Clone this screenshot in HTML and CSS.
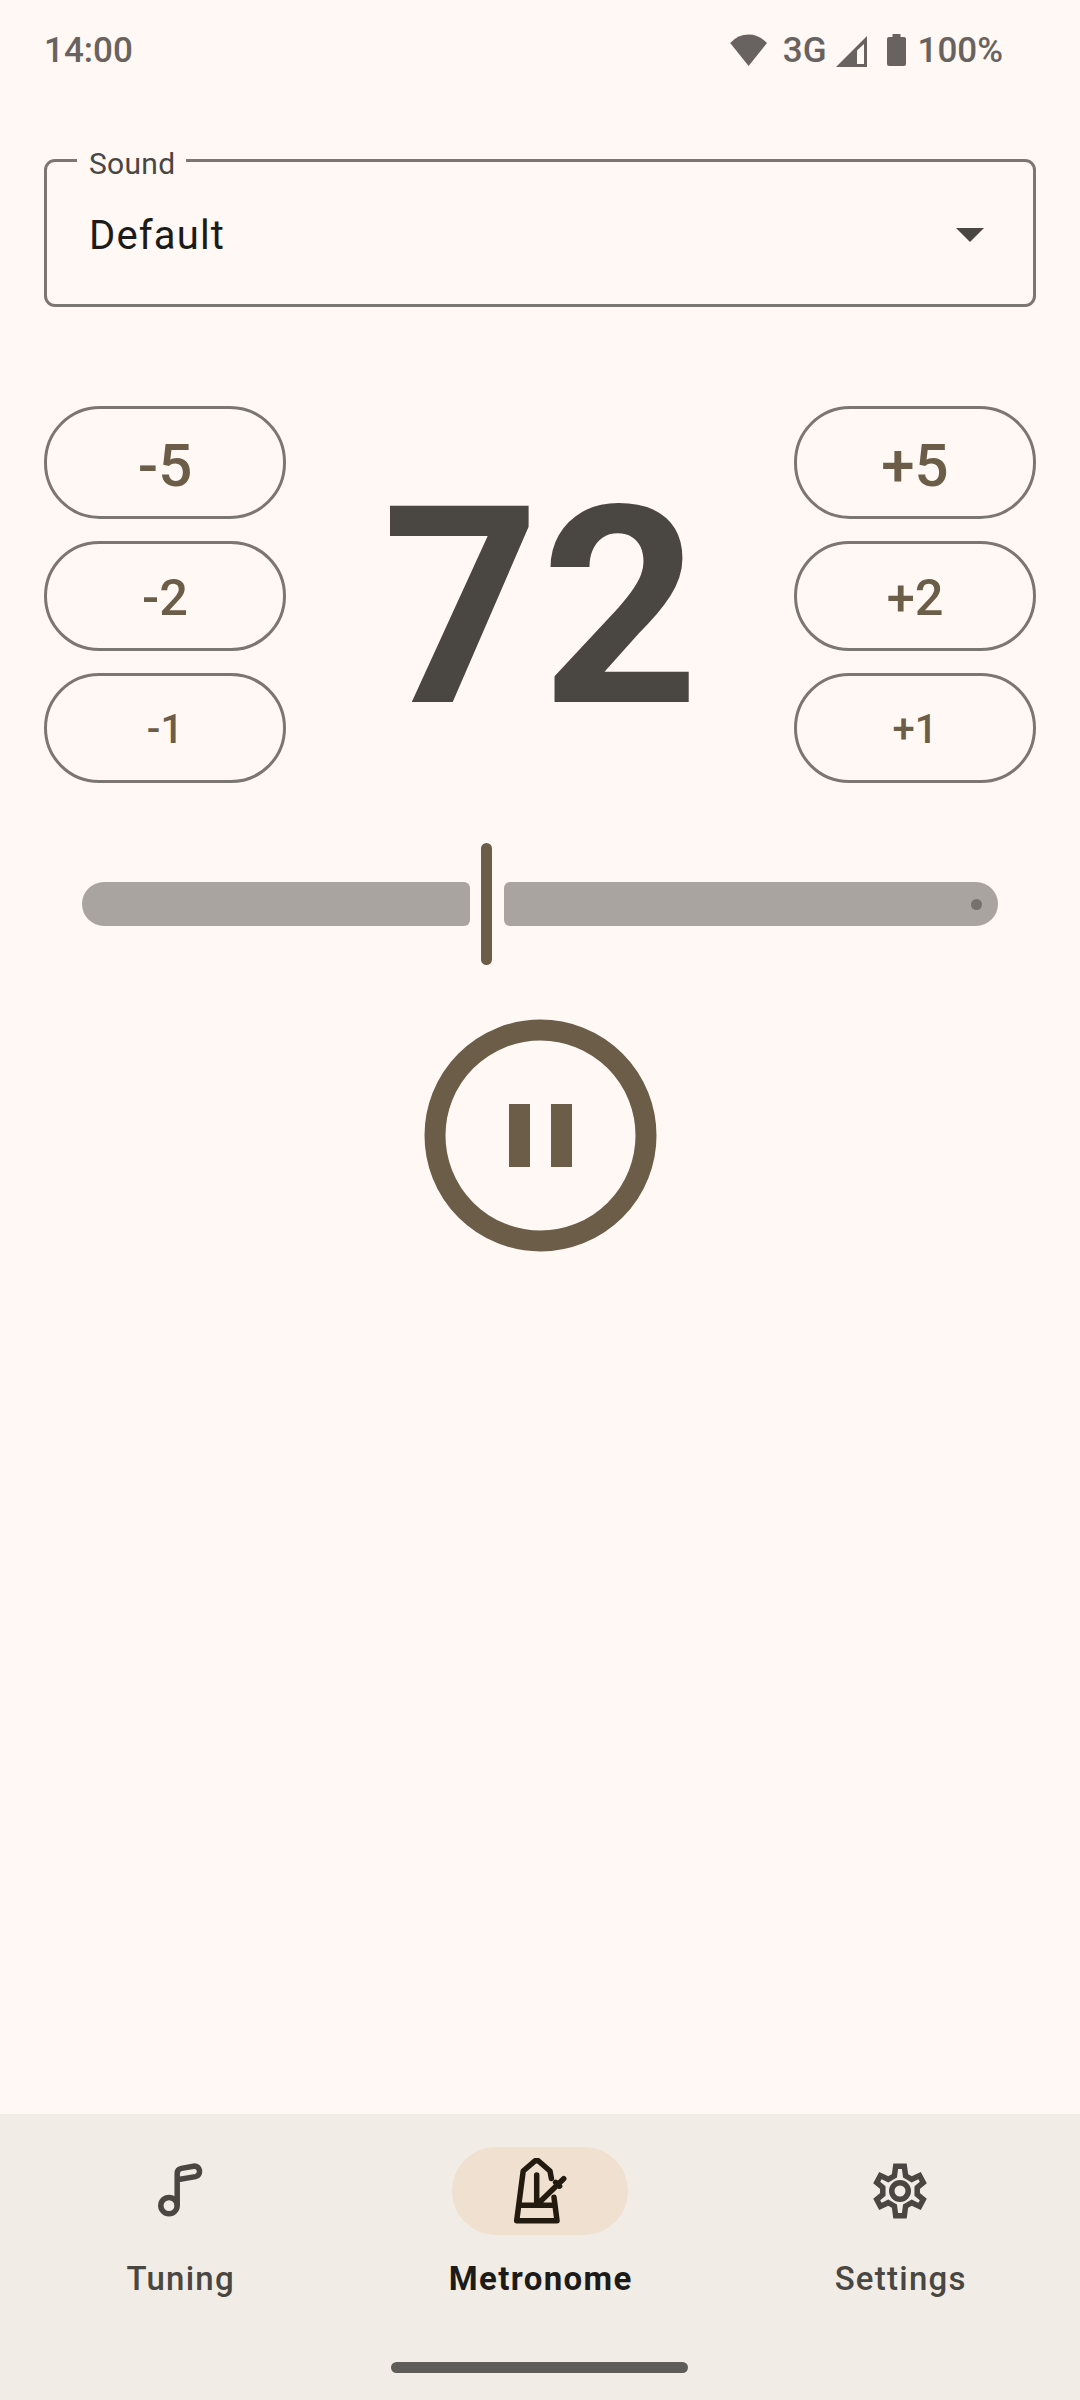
FILE: index.html
```html
<!DOCTYPE html>
<html lang="en">
<head>
<meta charset="utf-8">
<title>Metronome</title>
<link rel="stylesheet" href="styles.css">
</head>
<body>
<div class="screen">
  <header class="status">
    <span class="clock">14:00</span>
    <div class="status-icons">
      <svg class="wifi" viewBox="0 0 38 32"><path d="M0.2 9Q8 .6 18.6 .6T37 9L18.6 32Z"/></svg>
      <span class="network">3G</span>
      <svg class="signal" viewBox="0 0 31 31"><path fill-rule="evenodd" d="M0 31L31 0V31ZM21 14.5V28H28V8Z"/></svg>
      <svg class="battery" viewBox="0 0 19 32"><path d="M5.5 0h8v3H17q2 0 2 2v25q0 2-2 2H2q-2 0-2-2V5q0-2 2-2h3.500Z"/></svg>
      <span class="charge">100%</span>
    </div>
  </header>

  <main class="content">
    <div class="field">
      <span class="field-label">Sound</span>
      <span class="field-value">Default</span>
      <svg class="caret" viewBox="0 0 28 14"><path d="M0 0H28L14 14Z"/></svg>
    </div>

    <section class="tempo">
      <div class="steps">
        <button class="step large">-5</button>
        <button class="step medium">-2</button>
        <button class="step small">-1</button>
      </div>
      <div class="bpm">72</div>
      <div class="steps">
        <button class="step large">+5</button>
        <button class="step medium">+2</button>
        <button class="step small">+1</button>
      </div>
    </section>

    <div class="slider">
      <div class="track start"></div>
      <div class="thumb"></div>
      <div class="track end"><span class="stop"></span></div>
    </div>

    <svg class="pause" viewBox="0 0 232 232">
      <circle cx="116.500" cy="116.500" r="105.500"/>
      <path d="M85 85h21v63h-21zM127 85h21v63h-21z"/>
    </svg>
  </main>

  <footer class="bottom">
    <nav class="nav">
      <a class="nav-item">
        <span class="pill"><svg class="icon" viewBox="0 0 66 66"><circle cx="22" cy="47.600" r="8.200"/><path d="M30.200 47.600V15.500Q30.200 11.200 34.500 10.400L46.500 8.200C53.500 7.200 54.800 17.200 48.500 18.600L30.200 21.800"/></svg></span>
        <span class="nav-label">Tuning</span>
      </a>
      <a class="nav-item selected">
        <span class="pill"><svg class="icon round" viewBox="0 0 66 66"><path d="M44.400 20.500L43 13L31.200 2.700H28.300L16.200 13L9.700 62.700H50L47 39.300M12.500 47.300H47.500M29.700 17V47L56.700 20.700M48.600 24.300L52.600 28.200"/></svg></span>
        <span class="nav-label">Metronome</span>
      </a>
      <a class="nav-item">
        <span class="pill"><svg class="icon" viewBox="0 0 66 66"><circle cx="33" cy="33" r="8.250"/><path d="M28.700 8.200H37.300L38.600 17.800L44.800 21.300L52.600 17.600L56.300 24.500L50.200 29.500V36.500L56.300 41.500L52.600 48.400L44.800 44.700L38.600 48.200L37.300 57.800H28.700L27.400 48.200L21.200 44.700L13.400 48.400L9.700 41.500L15.800 36.500V29.500L9.700 24.500L13.400 17.600L21.200 21.300L27.400 17.800Z"/></svg></span>
        <span class="nav-label">Settings</span>
      </a>
    </nav>
    <div class="home"></div>
  </footer>
</div>
</body>
</html>
```
FILE: styles.css
```css
* { box-sizing: border-box; }
body { margin: 0; }
.screen {
  width: 1080px;
  height: 2400px;
  display: flex;
  flex-direction: column;
  background: #fff8f5;
  color: #4a4642;
  font-family: Roboto, "Liberation Sans", sans-serif;
}

.status {
  height: 100px;
  padding: 0 77px 0 44px;
  display: flex;
  justify-content: space-between;
  align-items: center;
  color: #686360;
  font-size: 35px;
  font-weight: 500;
}
.status-icons { display: flex; align-items: center; }
.status-icons svg { fill: currentColor; }
.wifi { width: 38px; height: 32px; margin-right: 15px; }
.signal { width: 31px; height: 31px; margin: 2px 20px 0 9px; }
.battery { width: 19px; height: 32px; margin-right: 12px; }

.content {
  flex: 1;
  padding: 59px 44px 0;
  display: flex;
  flex-direction: column;
  align-items: center;
}
.field {
  position: relative;
  width: 992px;
  height: 148px;
  padding: 4px 49px 0 42px;
  display: flex;
  justify-content: space-between;
  align-items: center;
  border: 3px solid #7b7672;
  border-radius: 11px;
}
.field-label {
  position: absolute;
  left: 30px;
  top: -20px;
  padding: 0 11px 0 12px;
  background: #fff8f5;
  font-size: 30px;
  line-height: 44px;
  letter-spacing: .3px;
}
.field-value {
  color: #1d1b19;
  font-size: 40px;
  letter-spacing: 1.15px;
}
.caret { width: 28px; height: 14px; fill: currentColor; }

.tempo {
  width: 992px;
  margin-top: 99px;
  display: flex;
  justify-content: space-between;
  align-items: center;
}
.steps { display: flex; flex-direction: column; gap: 22px; }
.step {
  width: 242px;
  height: 110px;
  padding: 0;
  border: 3px solid #7b7672;
  border-radius: 56px;
  background: none;
  color: #6b5d48;
  font-family: inherit;
  font-weight: 500;
}
.step.large { height: 113px; font-size: 60px; padding-top: 6px; }
.step.medium { font-size: 50.500px; padding-top: 3px; }
.step.small { font-size: 40px; padding-top: 3px; }
.bpm {
  font-size: 276px;
  line-height: 376px;
  font-weight: 700;
  letter-spacing: .8px;
  padding: 27px 0 0 2px;
  height: 376px;
  display: flex;
  align-items: center;
}

.slider {
  width: 916px;
  height: 122px;
  margin-top: 60px;
  display: flex;
  align-items: center;
}
.track { height: 44px; background: #a9a4a0; }
.track.start { width: 388px; border-radius: 22px 6px 6px 22px; }
.thumb {
  width: 11px;
  height: 122px;
  margin: 0 12px 0 10.500px;
  border-radius: 6px;
  background: #6b5d48;
}
.track.end {
  flex: 1;
  padding-right: 16px;
  display: flex;
  align-items: center;
  justify-content: flex-end;
  border-radius: 6px 22px 22px 6px;
}
.stop { width: 11px; height: 11px; border-radius: 50%; background: #75716d; }

.pause { width: 232px; height: 232px; margin-top: 54px; fill: #6b5d48; overflow: visible; }
.pause circle { fill: none; stroke: #6b5d48; stroke-width: 21px; }

.bottom {
  height: 286px;
  display: flex;
  flex-direction: column;
  align-items: center;
  justify-content: space-between;
  background: #f1ede6;
}
.nav { width: 1080px; display: flex; padding-top: 33px; }
.nav-item {
  flex: 1;
  display: flex;
  flex-direction: column;
  align-items: center;
  gap: 22px;
}
.pill {
  width: 176px;
  height: 88px;
  display: flex;
  align-items: center;
  justify-content: center;
  border-radius: 44px;
}
.selected .pill { background: #f0e0d0; color: #231a10; }
.icon { width: 66px; height: 66px; fill: none; stroke: currentColor; stroke-width: 5.500px; }
.icon.round { stroke-linecap: round; stroke-linejoin: round; }
.nav-label { padding-left: 1.400px; font-size: 33px; line-height: 44px; font-weight: 500; letter-spacing: 1.250px; }
.selected .nav-label { color: #1d1b19; font-weight: 700; letter-spacing: 1.375px; }
.home { width: 297px; height: 11px; margin: 0 1px 27px 0; border-radius: 6px; background: #5f5d5a; }
```
